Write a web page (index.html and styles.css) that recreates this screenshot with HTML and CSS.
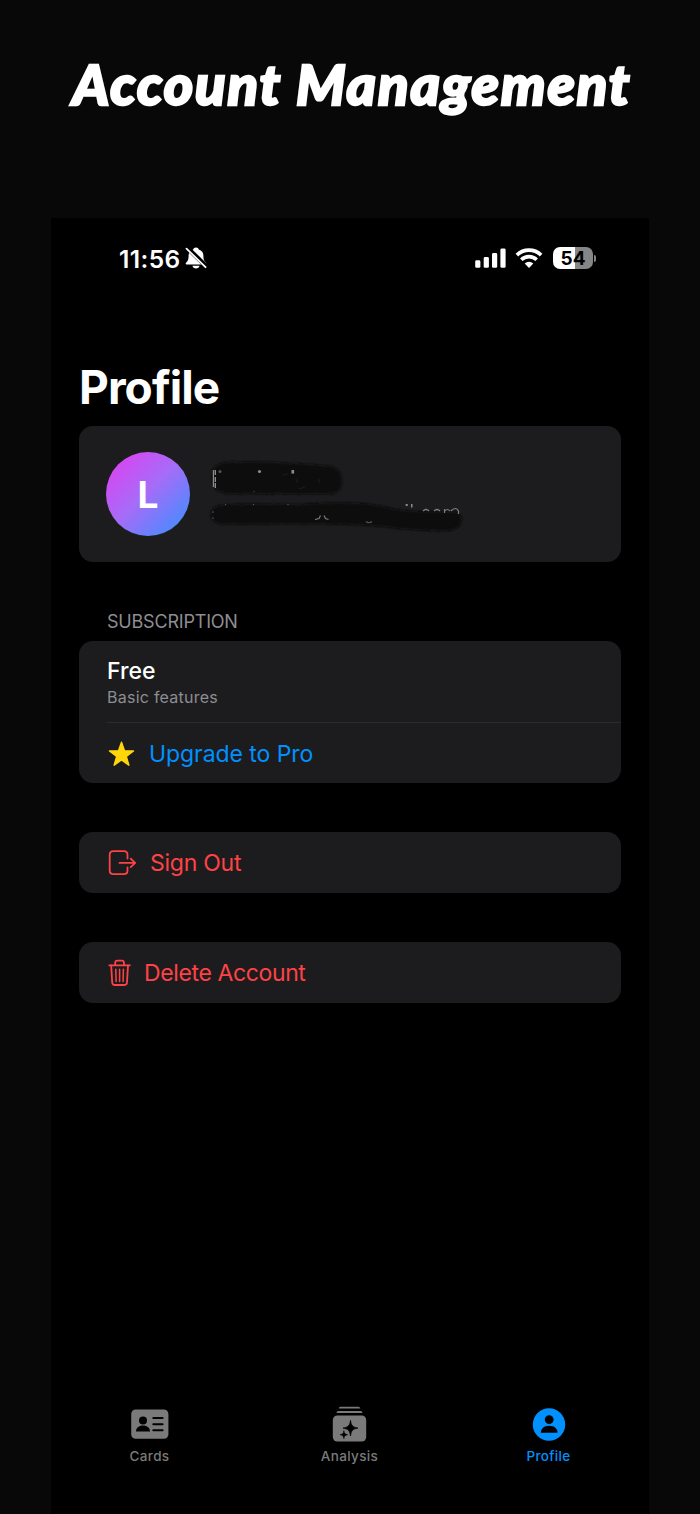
FILE: index.html
```html
<!DOCTYPE html>
<html lang="en">
<head>
    <meta charset="UTF-8">
    <title>Account Management</title>
    <link rel="stylesheet" href="styles.css">
</head>
<body>

<h1 class="headline"><span>Account Management</span></h1>

<div class="phone">
    <div class="statusbar">
        <span class="time">11:56</span>
        <svg class="bell" width="22" height="24" viewBox="0 0 22 24">
            <path d="M11 1.500c-1.500 0-2.500.8-2.800 1.900C5.200 4.300 3.600 6.500 3.600 9.400c0 4.200-.8 5.500-2.400 7.100-.9.900-.4 2 .8 2h18c1.200 0 1.700-1.100.8-2-1.600-1.600-2.400-2.900-2.400-7.100 0-2.900-1.600-5.100-4.600-6-.3-1.100-1.300-1.900-2.800-1.900z" fill="#fff"/>
            <path d="M7.500 19.700h7c-.3 1.700-1.600 2.700-3.500 2.700s-3.200-1-3.500-2.700z" fill="#fff"/>
            <path d="M2.300 1.800l19 18.600" stroke="#000" stroke-width="4.600"/>
            <path d="M1.500 2.600l19 18.600" stroke="#fff" stroke-width="1.800" stroke-linecap="round"/>
        </svg>
        <svg class="signal" width="32" height="20" viewBox="0 0 32 20" fill="#fff">
            <rect x="0.200" y="12.300" width="5.200" height="7.500" rx="1.400"/>
            <rect x="8.700" y="9" width="5.200" height="10.800" rx="1.400"/>
            <rect x="17" y="5" width="5.200" height="14.800" rx="1.400"/>
            <rect x="25.400" y="0.400" width="5.200" height="19.400" rx="1.400"/>
        </svg>
        <svg class="wifi" width="28" height="20" viewBox="0 0 28 20" fill="none" stroke="#fff">
            <path d="M1.900 7.100a17.300 17.300 0 0 1 24.200 0" stroke-width="3.800"/>
            <path d="M6.300 11.800a11 11 0 0 1 15.400 0" stroke-width="3.600"/>
            <path d="M14 19.900l-4.300-4.300a6 6 0 0 1 8.600 0z" fill="#fff" stroke="none"/>
        </svg>
        <div class="battery"><span>54</span></div>
    </div>

    <h2>Profile</h2>

    <div class="card user">
        <div class="avatar">L</div>
        <svg class="hidden-info" width="256" height="74" viewBox="0 0 256 74">
            <defs>
                <filter id="rough" x="-5%" y="-15%" width="110%" height="130%">
                    <feTurbulence type="fractalNoise" baseFrequency="0.35" numOctaves="2" result="n"/>
                    <feDisplacementMap in="SourceGraphic" in2="n" scale="3"/>
                    <feGaussianBlur stdDeviation="0.9"/>
                </filter>
            </defs>
            <g filter="url(#rough)" fill="#0a0a0a">
                <path d="M14 8C35 6 60 7 80 8c20 1 30 2 40 3 9 1 13 7 13 14 0 9-4 14-14 14H20C8 38 2 32 3 20 3 13 7 9 14 8z" fill="#101010"/>
                <path d="M14 18h108c8 1 11 4 11 8 0 8-4 13-14 13H20C10 38 5 34 4 27z"/>
                <path d="M12 50c25-3 50 0 80-1s60-3 85 3 45 4 68 5c7 1 8 5 7 10-1 6-7 9-17 9-35 0-60-5-85-6-45-2-90 0-138-1C-2 68-1 51 12 50z"/>
            </g>
            <g fill="#8c8c8c">
                <rect x="3.800" y="15" width="1.200" height="17"/>
                <rect x="5.600" y="15" width="1.400" height="5"/>
                <rect x="5.600" y="22" width="1.400" height="5"/>
                <rect x="5.600" y="28" width="1.400" height="5"/>
                <circle cx="11" cy="16.500" r="1.500" fill="#555"/>
                <circle cx="50.500" cy="16.500" r="1.600"/>
                <rect x="82.500" y="15" width="2.600" height="3.600"/>
                <rect x="196.700" y="49" width="2" height="2"/>
                <rect x="202" y="49" width="1.500" height="3.500"/>
                <circle cx="4" cy="57" r=".8" fill="#555"/>
                <circle cx="4" cy="63" r=".8" fill="#555"/>
                <circle cx="16.500" cy="49.500" r=".7" fill="#555"/>
                <circle cx="44.500" cy="49.500" r=".7" fill="#555"/>
                <circle cx="45" cy="36.500" r=".7" fill="#444"/>
                <circle cx="79" cy="49.500" r=".7" fill="#555"/>
            </g>
            <g fill="none" stroke="#7c7c7c" stroke-width="1.200">
                <path d="M106 64.500l4-1 1.500-3M115 60.500l1.500 3 3 1"/>
                <path d="M157 66.500q3 2.500 6 0" stroke="#555"/>
                <path d="M214 56q3-3 6 0M225 56q3-3 6 0M235.500 58v-4M236 56q2-3 5 0M242 56q5-5 7.500 0v3"/>
                <path d="M74 20l5-1M87 24l2 4M110 24v4M90 34l6-2" stroke="#1c1c1c"/>
            </g>
        </svg>
    </div>

    <div class="section">SUBSCRIPTION</div>
    <div class="card plan">
        <div class="current">
            <div class="name">Free</div>
            <div class="note">Basic features</div>
        </div>
        <div class="row upgrade">
            <svg width="28" height="28" viewBox="0 0 28 28">
                <path d="M14.500 2.200L17.500 10.800l9 .1-7.200 5.600 2.600 8.700-7.400-5.200-7.400 5.200 2.600-8.700L2.500 10.900l9-.1z" fill="#ffd60a" stroke="#ffd60a" stroke-width="1.400" stroke-linejoin="round"/>
            </svg>
            <span>Upgrade to Pro</span>
        </div>
    </div>

    <div class="card row danger signout">
        <svg width="30" height="28" viewBox="0 0 30 28" fill="none" stroke="#ff4245" stroke-width="1.800" stroke-linecap="round" stroke-linejoin="round">
            <path d="M20.500 9.600V5.900q0-3.700-3.700-3.700H6.400Q2.700 2.200 2.700 5.900v15.600q0 3.700 3.700 3.700h10.400q3.700 0 3.700-3.700v-3.200"/>
            <path d="M12.500 13.900h15.600M23.700 9.700l4.500 4.200-4.500 4.200"/>
        </svg>
        <span>Sign Out</span>
    </div>

    <div class="card row danger delete">
        <svg width="26" height="28" viewBox="0 0 26 28" fill="none" stroke="#ff4245" stroke-width="1.800" stroke-linecap="round" stroke-linejoin="round">
            <path d="M2.300 6.300h20.600M8.200 6V3.900q0-2.200 2.200-2.200h4.400q2.200 0 2.200 2.200V6"/>
            <path d="M4.200 6.500l1 17q.2 2.500 2.600 2.500h9.600q2.400 0 2.600-2.500l1-17"/>
            <path d="M8.800 10.200l.3 12.200M12.600 10.200v12.200M16.400 10.200l-.3 12.200" stroke-width="1.500"/>
        </svg>
        <span>Delete Account</span>
    </div>

    <div class="tabbar">
        <div class="tab">
            <svg width="40" height="36" viewBox="0 0 40 36">
                <rect x="1.200" y="3.500" width="37.200" height="29.300" rx="4.500" fill="#7a7a7a"/>
                <circle cx="13" cy="14.400" r="4" fill="#000"/>
                <path d="M6 25.600c0-3.600 2.800-6 7-6s7 2.400 7 6z" fill="#000"/>
                <path d="M23.300 12h9.300M23.300 18.200h9.300M23.300 24.300h9.300" stroke="#000" stroke-width="2" stroke-linecap="round"/>
            </svg>
            <span>Cards</span>
        </div>
        <div class="tab">
            <svg width="40" height="36" viewBox="0 0 40 36">
                <path d="M10.500 .8h18q1.500 0 1.800 1.700H8.700Q9 .8 10.500 .8zM8.400 5h22.200q1.600 0 2 2H6.400q.4-2 2-2z" fill="#7a7a7a"/>
                <rect x="2.800" y="9.400" width="33.400" height="26.200" rx="4.500" fill="#7a7a7a"/>
                <path d="M20.500 14.300C21.300 19.800 22.700 21.100 28 22.100 22.700 23.100 21.300 24.400 20.500 30 19.700 24.400 18.300 23.100 13 22.100 18.300 21.100 19.700 19.800 20.500 14.300z" fill="#000" stroke="#000" stroke-width=".7"/>
                <path d="M13.900 24.600c.4 2.900 1.100 3.600 3.900 4.100-2.800.5-3.500 1.200-3.900 4.100-.4-2.900-1.100-3.600-3.900-4.100 2.800-.5 3.500-1.200 3.900-4.100z" fill="#000" stroke="#000" stroke-width=".5"/>
            </svg>
            <span>Analysis</span>
        </div>
        <div class="tab active">
            <svg width="40" height="36" viewBox="0 0 40 36">
                <circle cx="20" cy="18.500" r="16.200" fill="#0091ff"/>
                <circle cx="20.200" cy="13.600" r="4.400" fill="#000"/>
                <path d="M11.800 26.700c0-4.200 3.300-7 8.400-7s8.400 2.800 8.400 7z" fill="#000"/>
            </svg>
            <span>Profile</span>
        </div>
    </div>
</div>

</body>
</html>
```

FILE: styles.css
```css
*{box-sizing:border-box}
body{
    margin:0;
    height:1514px;
    background:#080808;
    color:#fff;
    font-family:Inter, "Liberation Sans", sans-serif;
    overflow:hidden;
}
svg{
    display:block;
    flex:none;
    overflow:visible;
}
.headline{
    height:218px;
    margin:0;
    padding-top:50px;
    text-align:center;
    white-space:nowrap;
    font:italic 900 56px/68px Lato, sans-serif;
    letter-spacing:1.9px;
    -webkit-text-stroke:2.4px #fff;
}
.headline span{
    display:inline-block;
    margin-left:4px;
}
.phone{
    display:flex;
    flex-direction:column;
    width:598px;
    height:1296px;
    margin-left:51px;
    padding:0 28px;
    background:#000;
}
.statusbar{
    display:flex;
    align-items:center;
    height:80px;
    padding-left:40px;
    padding-right:28px;
}
.time{
    padding-top:2px;
    font-size:24.5px;
    font-weight:600;
    letter-spacing:.4px;
}
.bell{margin-left:4px}
.signal{margin-left:auto}
.wifi{margin:0 10px 0 8px}
.battery{
    position:relative;
    width:40px;
    height:22px;
    border-radius:7px;
    background:linear-gradient(90deg,#fff 54%,#868686 54%);
    color:#000;
    text-align:center;
    font-size:19px;
    font-weight:700;
    line-height:23px;
}
.battery:after{
    content:"";
    position:absolute;
    right:-3px;
    top:8px;
    width:2px;
    height:7px;
    border-radius:0 2px 2px 0;
    background:#868686;
}
h2{
    height:128px;
    margin:0;
    padding-top:61px;
    font-size:46px;
    line-height:56px;
    font-weight:700;
    letter-spacing:-.9px;
}
.card{
    flex:none;
    width:542px;
    border-radius:14px;
    background:#1c1c1e;
}
.user{
    display:flex;
    align-items:center;
    height:136px;
    padding-left:27px;
}
.avatar{
    width:84px;
    height:84px;
    margin-right:19px;
    border-radius:50%;
    background:linear-gradient(135deg,#df40f0 5%,#a66cf8 48%,#3d8fff 95%);
    text-align:center;
    font-size:37px;
    font-weight:700;
    line-height:86px;
}
.hidden-info{margin-top:-4px}
.section{
    height:79px;
    padding:48px 0 0 28px;
    color:#8d8d93;
    font-size:18px;
    line-height:24px;
    letter-spacing:-.2px;
}
.plan{
    height:142px;
    padding-left:28px;
}
.current{
    height:82px;
    padding-top:15px;
    border-bottom:1px solid #2b2b2d;
}
.name{
    font-size:23px;
    font-weight:500;
    line-height:30px;
}
.note{
    color:#8d8d93;
    font-size:16px;
    line-height:22px;
    letter-spacing:.25px;
}
.row{
    display:flex;
    align-items:center;
    height:61px;
    font-size:23px;
}
.upgrade{
    color:#0091ff;
    letter-spacing:-.07px;
}
.upgrade svg{margin-right:14px}
.danger{
    margin-top:49px;
    padding-left:28px;
    color:#ff4245;
}
.signout{letter-spacing:-.25px}
.delete{letter-spacing:-.38px}
.signout svg{margin-right:13px}
.delete svg{margin-right:11px}
.tabbar{
    display:flex;
    height:108px;
    margin:auto -28px 0;
}
.tab{
    display:flex;
    flex-direction:column;
    align-items:center;
    width:203px;
    color:#7a7a7a;
    font-size:13.5px;
    font-weight:500;
    line-height:20px;
    letter-spacing:.35px;
}
.tab:first-child{width:197px}
.tab:last-child{width:195px}
.tab svg{margin-bottom:4px}
.tab.active{color:#0091ff}
```
